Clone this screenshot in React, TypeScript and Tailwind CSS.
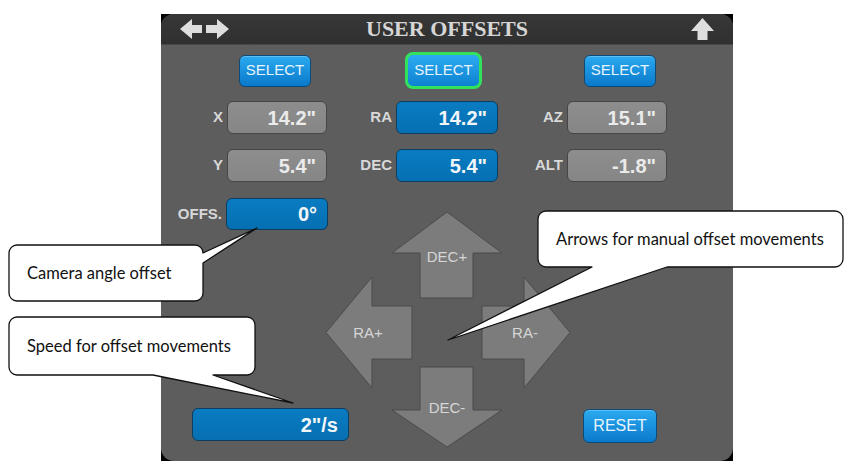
import type { ReactNode } from "react";

const sans = "font-['Liberation_Sans',Arial,sans-serif]";

function SelectButton({ active = false }: { active?: boolean }) {
  if (active) {
    return (
      <div className="flex h-[37px] w-[77px] items-center justify-center rounded-[8px] border-[3px] border-[#33e25c] bg-linear-to-b from-[#2cabf1] to-[#0c82d1] text-[15px] text-[#e8f4fc]">
        SELECT
      </div>
    );
  }
  return (
    <div className="flex h-[32px] w-[72px] items-center justify-center rounded-[6px] border border-[#0c4b78] bg-linear-to-b from-[#29aaf0] to-[#0a79ca] text-[15px] text-[#e8f4fc] shadow-[inset_0_1px_0_rgba(255,255,255,0.25)]">
      SELECT
    </div>
  );
}

function Field({ value, blue = false, w = "w-[100px]", h = "h-[33px]" }: { value: string; blue?: boolean; w?: string; h?: string }) {
  const tone = blue
    ? "bg-linear-to-b from-[#0a7cc2] to-[#066fb2] border-[#0b3e60] text-[#f3f6f8]"
    : "bg-linear-to-b from-[#8d8d8d] to-[#868686] border-[#464646] text-[#ebebeb]";
  return (
    <div className={`${w} ${h} ${tone} flex items-center justify-end rounded-[6px] border pr-[10px] text-[20px] font-bold`}>
      {value}
    </div>
  );
}

function Labeled({ label, children }: { label: string; children: ReactNode }) {
  return (
    <div className="flex items-center gap-[4px]">
      <div className="flex w-[42px] justify-end whitespace-nowrap text-[15px] font-bold text-[#d8d8d8]">{label}</div>
      {children}
    </div>
  );
}

function ArrowPad() {
  const fill = "#7c7c7c";
  const stroke = "#4b4b4b";
  return (
    <svg width="246" height="237" viewBox="0 0 246 237">
      <path d="M122 1 L177 42 L148 42 L148 87 L95 87 L95 42 L67 42 Z" fill={fill} stroke={stroke} />
      <path d="M1 121.5 L47 66 L47 95 L87 95 L87 148 L47 148 L47 177 Z" fill={fill} stroke={stroke} />
      <path d="M245 121.5 L199 66 L199 95 L157 95 L157 148 L199 148 L199 177 Z" fill={fill} stroke={stroke} />
      <path d="M95 156 L148 156 L148 199 L177 199 L122 236 L67 199 L95 199 Z" fill={fill} stroke={stroke} />
      <g fill="#d6d6d6" fontFamily="'Liberation Sans', Arial, sans-serif" fontSize="15" textAnchor="middle">
        <text x="122" y="51">DEC+</text>
        <text x="43" y="127">RA+</text>
        <text x="200" y="127">RA-</text>
        <text x="122" y="202">DEC-</text>
      </g>
    </svg>
  );
}

function Callouts() {
  return (
    <>
      <svg className="pointer-events-none absolute left-0 top-0" width="845" height="461" viewBox="0 0 845 461">
        <g fill="#ffffff" stroke="#111111" strokeWidth="1.3" strokeLinejoin="round">
          <path d="M17 245 H195 A8 8 0 0 1 203 253 L257 228 L203 263 V293 A8 8 0 0 1 195 301 H17 A8 8 0 0 1 9 293 V253 A8 8 0 0 1 17 245 Z" />
          <path d="M546 211 H835 A8 8 0 0 1 843 219 V259 A8 8 0 0 1 835 267 H667 L448 340 L592 267 H546 A8 8 0 0 1 538 259 V219 A8 8 0 0 1 546 211 Z" />
          <path d="M17 317 H247 A8 8 0 0 1 255 325 V367 A8 8 0 0 1 247 375 H213 L293 403 L153 375 H17 A8 8 0 0 1 9 367 V325 A8 8 0 0 1 17 317 Z" />
        </g>
      </svg>
      <div className="absolute left-[9px] top-[245px] flex h-[56px] w-[194px] items-center pl-[18px] font-['Lato',sans-serif] text-[16.5px] text-[#111]">
        Camera angle offset
      </div>
      <div className="absolute left-[538px] top-[211px] flex h-[56px] w-[305px] items-center pl-[18px] font-['Lato',sans-serif] text-[16.5px] text-[#111]">
        Arrows for manual offset movements
      </div>
      <div className="absolute left-[9px] top-[317px] flex h-[58px] w-[246px] items-center pl-[18px] font-['Lato',sans-serif] text-[16.5px] text-[#111]">
        Speed for offset movements
      </div>
    </>
  );
}

export default function App() {
  return (
    <div className={`relative h-[461px] w-[845px] overflow-hidden bg-white ${sans}`}>
      <div className="ml-[161px] mt-[14px] h-[447px] w-[572px] bg-black">
        <div className="flex h-full flex-col overflow-hidden rounded-[13px] bg-[#5d5d5d]">
          <div className="flex h-[31px] items-center border-b border-[#474747] bg-linear-to-b from-[#373737] to-[#303030] px-[19px]">
            <div className="w-[60px]">
              <svg width="49" height="22" viewBox="0 0 49 22">
                <path d="M0 11 L12 1 L12 7 L22 7 L22 15 L12 15 L12 21 Z" fill="#dedede" />
                <path d="M49 11 L37 1 L37 7 L26 7 L26 15 L37 15 L37 21 Z" fill="#dedede" />
              </svg>
            </div>
            <div className="flex-1 text-center font-['Liberation_Serif',serif] text-[22px] font-bold leading-none text-[#d6d6d6]">USER OFFSETS</div>
            <div className="flex w-[60px] justify-end">
              <svg width="23" height="23" viewBox="0 0 23 23">
                <path d="M11.5 0 L23 13 L16.5 13 L16.5 22 L6.5 22 L6.5 13 L0 13 Z" fill="#dedede" />
              </svg>
            </div>
          </div>

          <div className="mt-[7px] flex h-[37px] items-center pl-[78px]">
            <SelectButton />
            <div className="ml-[94px]">
              <SelectButton active />
            </div>
            <div className="ml-[102px]">
              <SelectButton />
            </div>
          </div>

          <div className="mt-[12px] flex pl-[20px]">
            <Labeled label="X">
              <Field value={'14.2"'} />
            </Labeled>
            <div className="ml-[23px]">
              <Labeled label="RA">
                <Field value={'14.2"'} blue w="w-[102px]" />
              </Labeled>
            </div>
            <div className="ml-[23px]">
              <Labeled label="AZ">
                <Field value={'15.1"'} />
              </Labeled>
            </div>
          </div>

          <div className="mt-[15px] flex pl-[20px]">
            <Labeled label="Y">
              <Field value={'5.4"'} />
            </Labeled>
            <div className="ml-[23px]">
              <Labeled label="DEC">
                <Field value={'5.4"'} blue w="w-[102px]" />
              </Labeled>
            </div>
            <div className="ml-[23px]">
              <Labeled label="ALT">
                <Field value={'-1.8"'} />
              </Labeled>
            </div>
          </div>

          <div className="mt-[16px] grid flex-1 grid-cols-[164px_246px_1fr]">
            <div className="col-span-2 col-start-1 row-start-1 self-start pl-[19px]">
              <Labeled label="OFFS.">
                <Field value="0°" blue w="w-[102px]" h="h-[32px]" />
              </Labeled>
            </div>
            <div className="col-start-2 row-start-1 mt-[13px] self-start">
              <ArrowPad />
            </div>
            <div className="col-span-2 col-start-1 row-start-1 mb-[20px] ml-[31px] self-end">
              <Field value={'2"/s'} blue w="w-[157px]" />
            </div>
            <div className="col-start-3 row-start-1 mb-[18px] ml-[12px] self-end">
              <div className="flex h-[34px] w-[74px] items-center justify-center rounded-[6px] border border-[#0c4b78] bg-linear-to-b from-[#29aaf0] to-[#0a79ca] text-[16px] text-[#e8f4fc] shadow-[inset_0_1px_0_rgba(255,255,255,0.25)]">
                RESET
              </div>
            </div>
          </div>
        </div>
      </div>
      <Callouts />
    </div>
  );
}
